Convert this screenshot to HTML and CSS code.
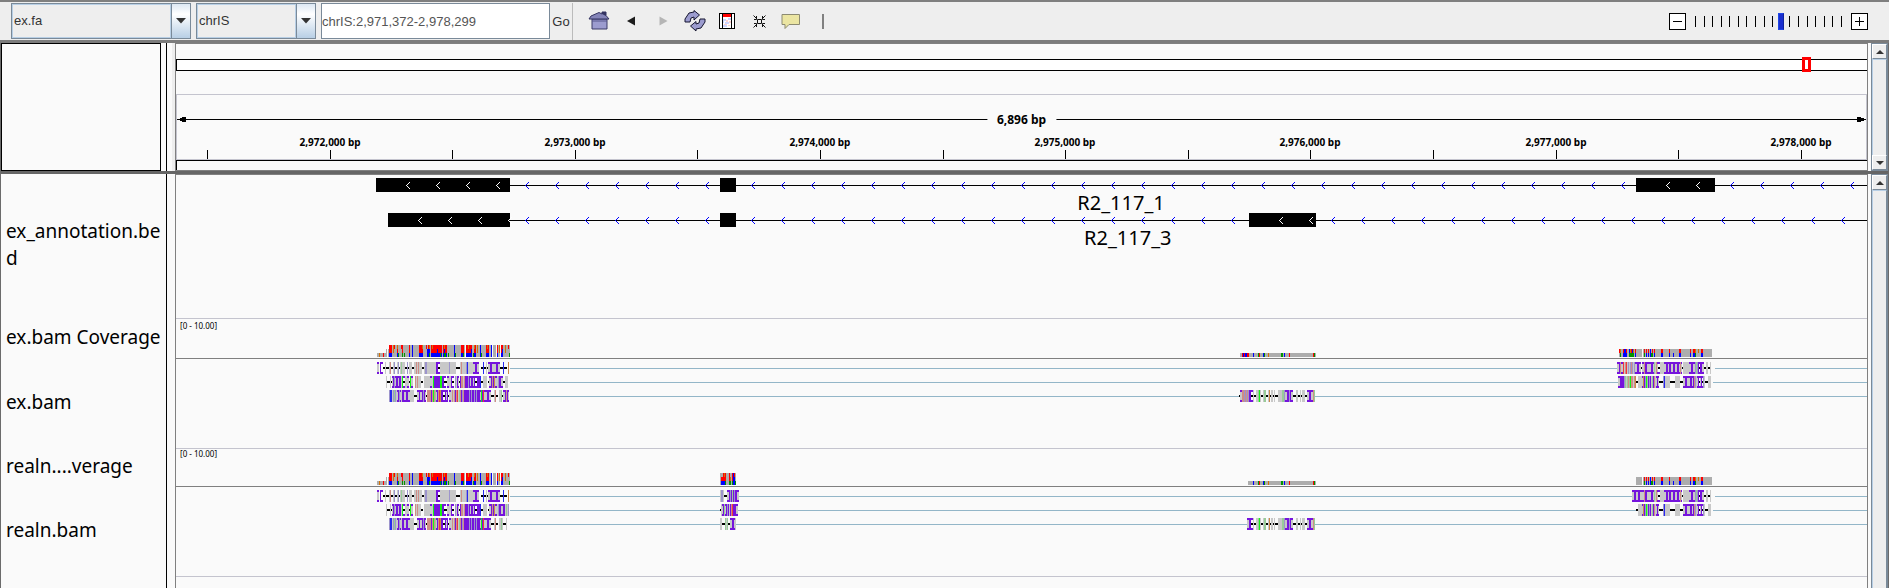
FILE: index.html
```html
<!DOCTYPE html>
<html lang="en">
<head>
<meta charset="utf-8">
<title>Genome viewer</title>
<link rel="stylesheet" href="styles.css">
</head>
<body>
<header class="toolbar">
  <div class="combo combo-genome">
    <select aria-label="Genome"><option>ex.fa</option></select>
    <span class="combo-arrow"><svg width="10" height="6"><path d="M0 0H10L5 5.500Z"/></svg></span>
  </div>
  <div class="combo combo-chrom">
    <select aria-label="Chromosome"><option>chrIS</option></select>
    <span class="combo-arrow"><svg width="10" height="6"><path d="M0 0H10L5 5.500Z"/></svg></span>
  </div>
  <input class="locus" type="text" aria-label="Locus" value="chrIS:2,971,372-2,978,299">
  <button class="go" type="button">Go</button>
  <nav class="icons">
    <button type="button" aria-label="Home"><svg width="22" height="20" viewBox="0 0 22 20"><path d="M4 8H19V18H4Z" fill="#9c9ccf" stroke="#3a3a66"/><path d="M1 8L3 5L11 1.500L14 3V1H18V4.500L21 8Z" fill="#8484b8" stroke="#333360"/><path d="M14 1H18V5L14 3Z" fill="#333360"/><path d="M4 10H19" stroke="#56568c"/></svg></button>
    <button type="button" aria-label="Back"><svg width="9" height="10"><path d="M0 5L8 0.500V9.500Z" fill="#1c1c1c"/></svg></button>
    <button type="button" aria-label="Forward" disabled><svg width="9" height="10"><path d="M8.500 5L0.500 0.500V9.500Z" fill="#b5b5b5"/></svg></button>
    <button type="button" aria-label="Refresh"><svg width="22" height="22" viewBox="0 0 22 22"><path d="M1 12L1 9L5 3L10 2V0.500L15.500 5L10 10V7L7 8L6 12Z" fill="#9c9ccf" stroke="#151530"/><path d="M21 9V12L17 18L12 19V21L6.500 16L12 11.500V14L15 13L16 9Z" fill="#9c9ccf" stroke="#151530"/></svg></button>
    <button type="button" aria-label="Region of interest"><svg width="16" height="16" shape-rendering="crispEdges"><path d="M0 0H16V16H0Z"/><path d="M1 1H3V15H1ZM4 1H12V15H4ZM13 1H15V15H13Z" fill="#fff"/><path d="M4 1H12V4H4Z" fill="red"/><path d="M4 6H7V8H5V10H4ZM9 5H12V7H9ZM6 9H10V11H6ZM4 12H8V14H4Z" fill="#cdd5ff"/><path d="M7 7H9V9H7ZM10 8H12V10H10ZM5 11H8V12H5ZM9 12H11V13H9Z" fill="#ffd0d0"/></svg></button>
    <button type="button" aria-label="Fit to window"><svg width="13" height="13" fill="none" stroke="#111"><path d="M4.500 4.500H8.500V8.500H4.500ZM0.500 0.500L3.500 3.500M1 4.500H3.500V1M12.500 0.500L9.500 3.500M12 4.500H9.500V1M0.500 12.500L3.500 9.500M1 8.500H3.500V12M12.500 12.500L9.500 9.500M12 8.500H9.500V12"/></svg></button>
    <button type="button" aria-label="Pop-up text"><svg width="20" height="17" viewBox="0 0 20 17"><path d="M1 1.500H18.500V11.500H8L4 15.500V11.500H1Z" fill="#ebe5a2" stroke="#8c8a72"/></svg></button>
    <i class="bar"></i>
  </nav>
  <div class="zoomer">
    <button type="button" aria-label="Zoom out"><svg width="9" height="9"><path d="M0 4.500H9" stroke="#000"/></svg></button>
    <div class="range">
      <div class="range-ticks" id="rangeTicks"></div>
      <input type="range" min="0" max="17" value="10" aria-label="Zoom level">
    </div>
    <button type="button" aria-label="Zoom in"><svg width="9" height="9"><path d="M0 4.500H9M4.500 0V9" stroke="#000"/></svg></button>
  </div>
</header>

<main class="viewer">
  <section class="pane pane-header">
    <div class="names names-box"></div>
    <div class="gutter gutter-soft"></div>
    <div class="data ruler">
      <svg id="ruler" class="plot" height="126" viewBox="0 0 1691 126" preserveAspectRatio="none"></svg>
      <span class="span-label">6,896 bp</span>
      <div id="rulerLabels"></div>
    </div>
    <div class="scroll"><button type="button" aria-label="Scroll up"><svg width="8" height="4"><path d="M4 0L8 4H0Z"/></svg></button><div class="scroll-track"></div><button type="button" aria-label="Scroll down"><svg width="8" height="4"><path d="M0 0H8L4 4Z"/></svg></button></div>
  </section>
  <section class="pane pane-tracks">
    <div class="names">
      <div class="name name-annotation"><span>ex_annotation.be<br>d</span></div>
      <div class="name name-coverage">ex.bam Coverage</div>
      <div class="name name-reads">ex.bam</div>
      <div class="name name-coverage2">realn....verage</div>
      <div class="name name-reads">realn.bam</div>
    </div>
    <div class="gutter"></div>
    <div class="data">
      <div class="track">
        <svg id="genes" class="plot" height="143" viewBox="0 0 1691 143" preserveAspectRatio="none"></svg>
        <span class="gene gene-a">R2_117_1</span>
        <span class="gene gene-b">R2_117_3</span>
      </div>
      <div class="track track-lined">
        <span class="scale">[0 - 10.00]</span>
        <svg id="ex" class="plot" height="129" viewBox="0 0 1691 129" preserveAspectRatio="none"></svg>
      </div>
      <div class="track track-lined">
        <span class="scale scale-tight">[0 - 10.00]</span>
        <svg id="realn" class="plot" height="127" viewBox="0 0 1691 127" preserveAspectRatio="none"></svg>
      </div>
      <div class="track track-lined"></div>
    </div>
    <div class="scroll"><button type="button" aria-label="Scroll up"><svg width="8" height="4"><path d="M4 0L8 4H0Z"/></svg></button><div class="scroll-track"></div></div>
  </section>
</main>
<script src="tracks.js"></script>
</body>
</html>
```
FILE: styles.css
```css
* { box-sizing: border-box; }
body {
  margin: 0;
  height: 100vh;
  display: flex;
  flex-direction: column;
  overflow: hidden;
  background: #fafafa;
  color: #000;
  font-family: "Noto Sans", "Open Sans", sans-serif;
}
button, select, input { font-family: "Liberation Sans", Arial, sans-serif; margin: 0; }
button { padding: 0; border: 0; background: none; display: grid; place-items: center; }
svg { display: block; }

.toolbar {
  flex: none;
  display: flex;
  align-items: center;
  gap: 5px;
  height: 43px;
  padding: 0 21px 0 11px;
  background: #eee;
  border-top: 2px solid #7f7f7f;
  border-bottom: 3px solid #7c7c7c;
}
.combo { display: flex; height: 36px; border: 1px solid #7a8a99; }
.combo-genome { width: 180px; }
.combo-chrom { width: 120px; }
.combo select {
  appearance: none;
  flex: 1;
  min-width: 0;
  padding: 0 2px 2px 1px;
  border: 1px solid #b8cfe5;
  border-radius: 0;
  background: #eee;
  color: #333;
  font-size: 13px;
}
.combo-arrow {
  width: 19px;
  display: grid;
  place-items: center;
  border-left: 1px solid #7a8a99;
  background: linear-gradient(#dde8f3, #fff 30%, #b8cfe5);
  fill: #333;
}
.locus {
  width: 229px;
  height: 36px;
  padding: 0;
  border: 1px solid #7a8a99;
  background: #fff;
  color: #555;
  font-size: 13px;
}
.go {
  width: 23px;
  height: 37px;
  margin-left: -5px;
  border-right: 1px solid #bbb;
  color: #333;
  font-size: 13px;
}
.icons { display: flex; align-items: center; margin-left: 5px; }
.icons button { width: 32px; height: 36px; }
.bar { width: 2px; height: 15px; margin-left: 15px; background: #808080; }
.zoomer { display: flex; align-items: center; gap: 9px; margin-left: auto; }
.zoomer button { width: 17px; height: 17px; border: 1px solid #000; background: #fff; }
.range { display: grid; width: 147px; height: 17px; }
.range > * { grid-area: 1 / 1; }
.range-ticks { display: flex; justify-content: space-between; align-items: center; }
.range-ticks i { width: 1px; height: 11px; background: #000; }
.range input { appearance: none; width: 100%; height: 17px; background: none; }
.range input::-webkit-slider-thumb {
  appearance: none;
  width: 6px;
  height: 17px;
  border: 1px solid #1f47e8;
  border-right-color: #10239c;
  background: #1a2fcf;
}

.viewer { flex: 1; min-height: 0; display: flex; flex-direction: column; border: solid #6b6b6b; border-width: 0 1px; }
.pane { display: grid; grid-template-columns: 160px 14px minmax(0, 1fr) 20px; }
.pane-header { flex: none; height: 131px; border-bottom: 3px solid #666; }
.pane-tracks { flex: 1; min-height: 0; }
.names { overflow: hidden; background: #fafafa; }
.names-box { border: 1px solid #000; }
.gutter { margin-left: 5px; border-left: 1px solid #000; background: #fafafa; }
.gutter-soft { background: linear-gradient(90deg, #fafafa 5px, #eee 5px); }
.data { position: relative; overflow: hidden; border: 1px solid #808080; }
.pane-tracks .data { border-bottom: 0; }
.plot { width: 100%; shape-rendering: crispEdges; }

.span-label, .tick-label { position: absolute; transform: translateX(-50%); white-space: nowrap; font-weight: 700; background: #fafafa; }
.span-label { top: 68px; left: 50%; padding: 0 10px; font-size: 12px; line-height: 16px; }
.tick-label { top: 91px; font-size: 10px; line-height: 14px; }

.scroll { display: flex; flex-direction: column; margin-left: 3px; background: #eee; border: 1px solid #7a8a99; border-bottom: 0; }
.pane-header .scroll { border-bottom: 1px solid #7a8a99; }
.scroll button { flex: none; height: 15px; border: 1px solid #7a8a99; border-top-color: #fff; border-left-color: #fff; fill: #333; }
.scroll-track { flex: 1; border-left: 1px solid #b8cfe5; border-top: 1px solid #b8cfe5; border-right: 1px solid #7a8a99; }

.name { display: flex; align-items: center; padding: 0 0 2px 5px; font-size: 19px; line-height: 27px; white-space: nowrap; }
.name-annotation { height: 144px; }
.name-coverage { height: 40px; }
.name-coverage2 { height: 38px; }
.name-reads { height: 90px; }

.track { position: relative; }
.track-lined { border-top: 1px solid #c4c4ce; }
.gene { position: absolute; font-size: 20px; line-height: 24px; }
.gene-a { left: 53.3%; top: 16px; }
.gene-b { left: 53.7%; top: 51px; }
.scale { position: absolute; left: 4px; top: 1px; font-size: 8px; line-height: 11px; }
.scale-tight { top: -1px; }
```
FILE: tracks.js
```js
const ORIGIN = 176;
const rect = (x, y, w, h, c) => `<rect x="${x - ORIGIN}" y="${y}" width="${w}" height="${h}" fill="${c}"/>`;
const draw = (id, parts) => { document.getElementById(id).innerHTML = parts.join(''); };
const runs = (s) => [...s.matchAll(/(\d+)(\S)/g)].map((m) => [+m[1], m[2]]);

/* Zoom slider ticks */
document.getElementById('rangeTicks').innerHTML = '<i></i>'.repeat(18);

/* Ruler and ideogram */
const ruler = [
  rect(176, 15, 1691, 12, '#000'), rect(177, 16, 1690, 10, '#fff'),
  rect(176, 50, 1691, 1, '#c4c4ce'), rect(176, 50, 1, 66, '#c4c4ce'), rect(1866, 50, 1, 66, '#c4c4ce'),
  rect(177, 75, 811, 1, '#000'), rect(1056, 75, 810, 1, '#000'),
  rect(180, 74, 6, 3, '#000'), rect(182, 73, 4, 5, '#000'),
  rect(1857, 74, 7, 3, '#000'), rect(1857, 73, 4, 5, '#000'),
  rect(176, 115, 1691, 1, '#c4c4ce'), rect(176, 116, 1691, 1, '#000'), rect(176, 116, 1, 10, '#000'),
  rect(1802, 13, 9, 15, 'red'), rect(1805, 16, 3, 9, '#fff'),
];
let labels = '';
for (let i = 0; i < 14; i++) {
  const x = Math.round(207 + i * 122.6);
  ruler.push(rect(x, 106, 1, 9, '#000'));
  if (i % 2) labels += `<span class="tick-label" style="left:${((x - ORIGIN) / 16.91).toFixed(2)}%">2,97${2 + (i - 1) / 2},000 bp</span>`;
}
draw('ruler', ruler);
document.getElementById('rulerLabels').innerHTML = labels;

/* Gene models */
const genes = [];
const chevrons = (from, to, y, c) => {
  for (let x = from; x < to; x += 30) {
    for (let i = 0; i < 4; i++) {
      genes.push(rect(x + i, y - i, 1, 1, c), rect(x + i, y + i, 1, 1, c));
    }
  }
};
const gene = (y, start, exons) => {
  genes.push(rect(start, y, 1867 - start, 1, '#000'));
  let edge = start;
  exons.concat([[1867, 1867]]).forEach(([a, b]) => {
    if (a > edge) chevrons(edge + 15, a - 5, y, '#00f');
    if (b > a) genes.push(rect(a, y - 7, b - a, 14, '#000'));
    if (b - a > 40) chevrons(a + 30, b, y, '#fff');
    edge = b;
  });
};
gene(10, 376, [[376, 510], [720, 736], [1636, 1715]]);
gene(45, 388, [[388, 510], [720, 736], [1249, 1316]]);
draw('genes', genes);

/* Coverage: each letter is a column, listed top, middle, bottom */
const GREY = '#adadad', RED = '#f00', BLUE = '#00f', GREEN = '#009600', ORANGE = '#d17105';
const COLUMNS = {
  g: [GREY, GREY, GREY], r: [RED, RED, BLUE], q: [RED, GREY, GREY], R: [RED, RED, RED],
  b: [GREY, BLUE, BLUE], B: [BLUE, BLUE, BLUE], n: [RED, BLUE, BLUE], m: [GREY, GREY, GREEN],
  G: [GREEN, GREEN, GREEN], o: [ORANGE, ORANGE, GREY], h: [RED, RED, GREEN], k: [ORANGE, BLUE, GREEN],
  p: [ORANGE, RED, BLUE], c: [GREY, RED, BLUE], d: [GREY, ORANGE, GREEN], e: [GREY, RED, GREY],
  f: [GREY, BLUE, GREEN], v: [GREY, GREY, BLUE], O: [ORANGE, ORANGE, ORANGE],
};
const coverage = (x, base, levels, spec) => runs(spec).map(([n, c]) => {
  let out = '';
  if (c !== '.') for (let i = 3 - levels; i < 3; i++) out += rect(x, base - (3 - i) * 4, n, 4, COLUMNS[c][i]);
  x += n;
  return out;
}).join('');

/* Reads: letters give a base colour; k is a deletion, P, T, t and s build insertion marks */
const BASES = { g: '#c8c8c8', r: '#cf8d86', R: '#f0383c', b: '#9c94cc', B: '#2828f0', G: '#14f514', L: '#98cc98', o: '#cc8a48', P: '#7514dc', T: '#c8c8c8' };
const read = (x, y, spec) => runs(spec).map(([n, c]) => {
  let out = '';
  if (BASES[c]) out += rect(x, y, n, 12, BASES[c]);
  if (c === 'k' || c === 's') out += rect(x, y + 5, n, 2, '#000');
  if ('Tts'.includes(c)) out += rect(x, y, n, 2, BASES.P) + rect(x, y + 10, n, 2, BASES.P);
  x += n;
  return out;
}).join('');

const COV_LEFT = '2r 1r 1g 1o 1q 2g 1p 1m 2g 1q 1h 1g 1m 4g 1r 2g 1B 5g 1g 2r 1r 1p 3g 1q 1b 1n 1k 1g 1r 1p 4r 1n 2r 1h 1r 1g 1r 1k 1h 1r 1g 1m 5g 1B 1m 5g 2r 1h 1g 1. 2r 1p 2r 1n 1g 1m 1p 1r 1g 1o 2g 1B 1m 4g 1r 1p 1r 2g 1B 1. 3g 1. 1r 1g 1o 1. 1r 1n 2g 1o 2g 1q 1m';
const LEFT_A = '2T 1. 1P 2t 2k 1g 3k 1g 1r 2k 1g 1b 2k 1g 1b 1k 1g 1L 3g 2k 1b 1k 3g 2k 2g 1r 1g 1r 3g 2k 1g 2b 9g 2P 2s 9g 1b 6g 4k 1g 1r 4g 1b 1B 1g 4g 2T 2P 2T 2. 2k 1B 2k 1g 1k 2T 2P 4T 2P 2T 3k 1B 3k 1. 1o';
const LEFT_B = '1g 3k 1g 1k 1T 1P 1b 1T 2P 1T 2P 1g 1G 2s 2g 2T 1k 1G 2T 2. 1r 1g 1r 2g 1g 2k 1. 2g 4g 2T 1g 1G 1P 5P 2G 1P 1P 2s 1k 2T 1g 1g 1P 2s 1. 1b 1g 1P 1T 1k 1P 2r 1g 1r 3P 1b 1P 1T 2P 1T 1P 2s 1P 2P 1B 2k 4g 1. 1k 2T 1P 1r 1P 1o 2T 1g 1b';
const LEFT_C = '1b 2B 1g 1b 1L 1b 1g 1T 1P 1b 1T 1g 2P 2T 2P 2T 4g 3k 2T 1P 2T 1P 1b 1P 1T 1k 4r 1P 1r 1G 1r 1L 1T 1P 1r 1R 1o 2P 2s 1P 1T 1P 1k 2T 1g 1r 1g 1r 1P 1r 1R 1g 1L 1r 1P 1b 1r 5P 1b 1P 1b 1P 1P 1b 1P 1b 1P 2P 1T 1G 1P 1R 1T 2T 2P 2T';
const MID_COV = '5g 1B 4g 1G 1R 3g 1B 1G 3g 1O 12g 2G 1g 1B 4g 1R 23g 1R 1G 1g';
const MID = '2k 1g 1g 1L 1G 1g 2k 1g 2L 2k 1g 1o 1k 2g 1k 1g 3k 4g 2L 1b 2T 2P 1b 1P 2T 3k 2g 2k 1g 1k 3g 2k 2T 2P 2T 1r 1L';
const RIGHT_COV = '1q 1h 1g 1r 1g 1r 1g 1b 1m 1h 1g 1r 6g 2r 6g 1r 3g 1v 5g 2r 9g 1r 2g 1r 1c 1d 2g 1o 2g 2r 9g';
const RIGHT_A = '2T 1r 2P 4T 2P 1T 1L 1g 1r 1T 2s 4g 2T 2P 1T 2P 2T 2P 2T 2P 1T 1r 1T 1k 6g 2T 2P 2T 1b 1L 1b 1P 1s 2P 2T 2k 1g 1g 2k 1g';
const RIGHT_B = '2k 4g 1T 1o 1P 1b 1G 1L 1P 1b 1P 1g 1L 1P 1r 1g 1T 1P 1T 4k 1b 1B 5g 5k 5g 3k 2T 2P 3T 2P 1T 1P 1r 1b 1g 1T 1P 1s 1T 1P 1s 1b 1g 3k 3g';

const alignment = (id, axis, rows, marks) => {
  const parts = [rect(176, axis, 1691, 1, '#7f7f7f')];
  rows.forEach((y) => parts.push(rect(510, y + 6, 1357, 1, '#93b6c8')));
  /* Page-coloured backing keeps the mate line hidden behind each block of reads */
  marks.blanks.forEach(([x, row, w]) => parts.push(rect(x, rows[row] + 5, w, 3, '#fafafa')));
  const base = axis - 1;
  parts.push(coverage(377, base, 1, '2g 1O 3g 1R 3g'), coverage(386, base, 2, '1g 1. 1g'), coverage(389, base, 3, COV_LEFT));
  marks.coverage.forEach(([x, levels, s]) => parts.push(coverage(x, base, levels, s)));
  marks.reads.forEach(([x, row, s]) => parts.push(read(x, rows[row], s)));
  draw(id, parts);
};

alignment('ex', 39, [43, 57, 71], {
  blanks: [[1240, 2, 75], [1618, 0, 97], [1619, 1, 94]],
  coverage: [
    [1240, 1, '2g 1R 1B 1R 2B 2R 4g 1B 4g 1G 1R 3g 1B 1G 3g 1O 12g 2G 1g 1B 4g 1R 23g 1R 1G 1g'],
    [1619, 2, '1e 1d 2g 1c 2b 1c 2g 1f 1d 1h 1f 1d 1g 1c 6g 1.'],
    [1643, 2, RIGHT_COV],
  ],
  reads: [
    [377, 0, LEFT_A], [386, 1, LEFT_B + ' 2P 2T 2k 3g'],
    [389, 2, LEFT_C + ' 3k 1g 1r 2k 1. 2g 1L 1k 2T 1P 1r 1P 1T'],
    [1239, 2, '1k 2T 2r 1b 1r 1b 1r 1b 2P 2s 1g ' + MID],
    [1617, 0, '2T 1P 1r 2T 1R 1g 1r 1R 1g 1b 1g 1b 1r 1b 1g 1b 2T 2P 2T 1k ' + RIGHT_A],
    [1618, 1, '2T 3P 1P 1b 1L 1g 1L 1r 1L 1G 1r 1r 1g 1r 1o ' + RIGHT_B],
  ],
});
alignment('realn', 37, [41, 55, 69], {
  blanks: [[720, 0, 18], [720, 1, 17], [720, 2, 16], [1248, 2, 67], [1633, 0, 82], [1636, 1, 77]],
  coverage: [
    [720, 3, '1g 2c 1r 1p 1h 3g 1h 1d 1g 1h 1B 1n 1m'],
    [1248, 1, MID_COV],
    [1636, 2, '6g 1.'], [1643, 2, RIGHT_COV],
  ],
  reads: [
    [377, 0, LEFT_A], [386, 1, LEFT_B + ' 2P 1T 1T 2P 1g 1L 1g 1b'],
    [389, 2, LEFT_C + ' 3k 1g 1r 2k 1. 2g 1L 1g 3k 1g'],
    [720, 0, '1g 2b 1g 3k 2T 1P 1b 1P 1L 1P 1b 2P 2T'],
    [720, 1, '1k 1g 1T 1P 1L 1T 1P 1b 1P 1g 1P 1r 1R 1P 2P 2T'],
    [720, 2, '2g 3k 1L 1g 1L 2k 2T 2P 1T 1g'],
    [1247, 2, '2T 2P 2s 1g ' + MID],
    [1632, 0, '2T 2P 2T 2P 2T ' + RIGHT_A],
    [1636, 1, RIGHT_B],
  ],
});
```
